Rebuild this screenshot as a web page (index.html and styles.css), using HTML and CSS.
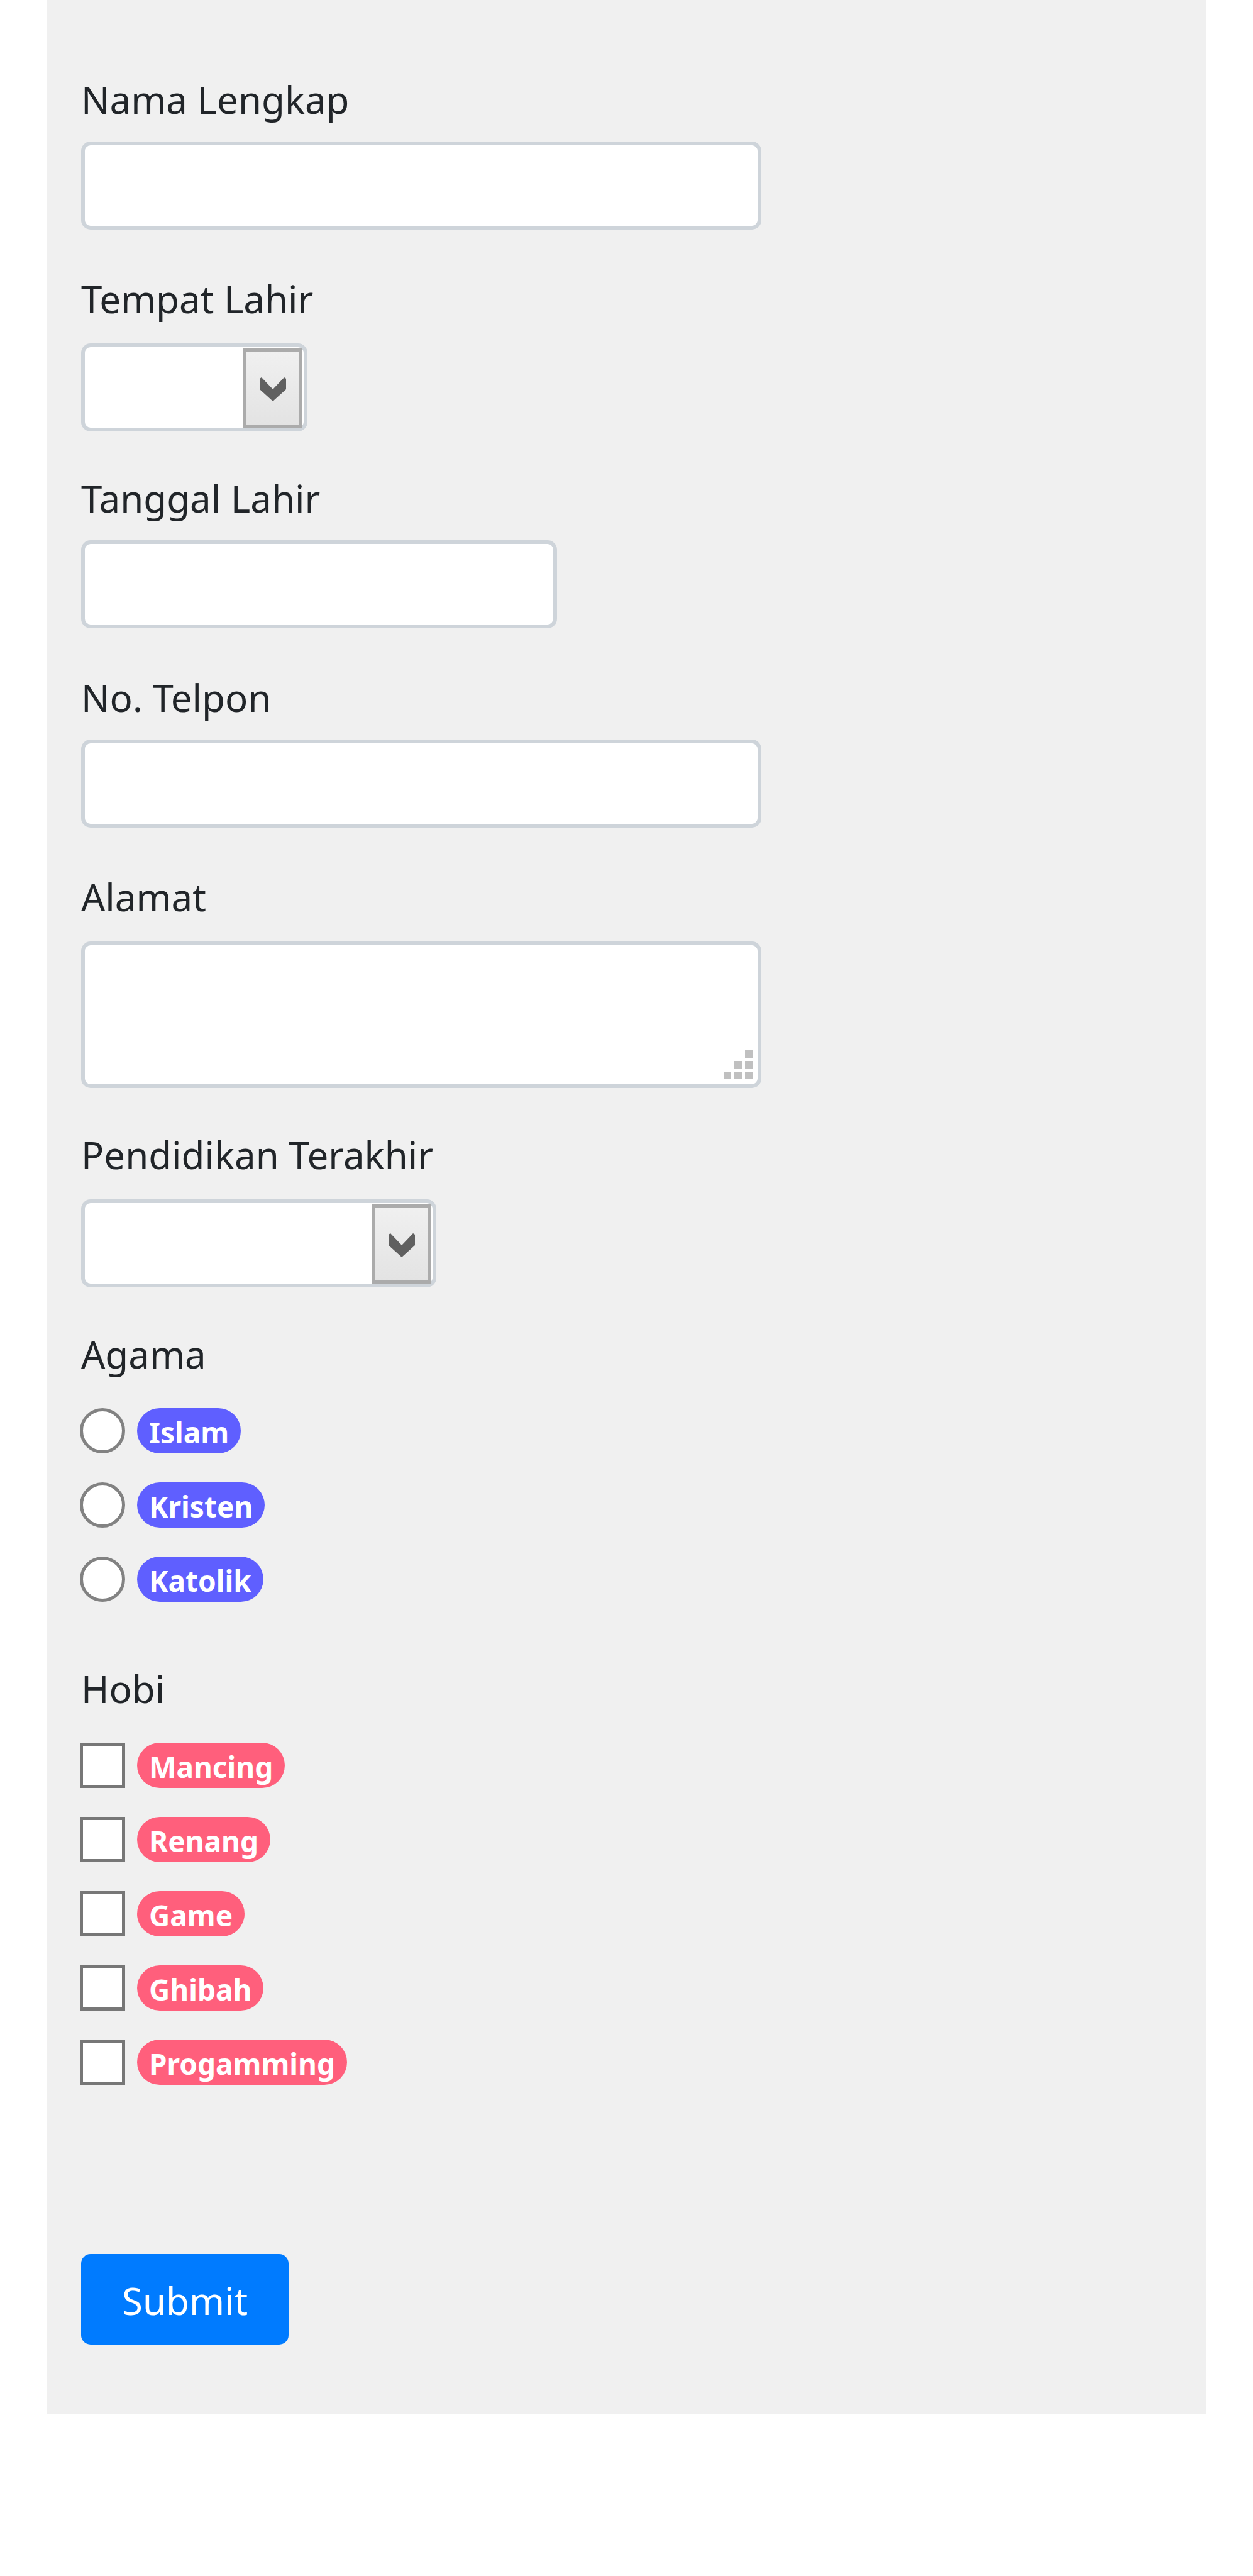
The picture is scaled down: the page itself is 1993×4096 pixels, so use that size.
FILE: index.html
```html
<!DOCTYPE html>
<html lang="id">
<head>
<meta charset="utf-8">
<meta name="viewport" content="width=device-width, initial-scale=1">
<title>Formulir Biodata</title>
<link rel="stylesheet" href="styles.css">
</head>
<body>
<form class="card">
  <div class="group">
    <label class="label" for="nama">Nama Lengkap</label>
    <input class="control control-full" type="text" id="nama" name="nama">
  </div>
  <div class="group group-loose">
    <label class="label" for="tempat">Tempat Lahir</label>
    <div class="overlay select-short">
      <select class="control" id="tempat" name="tempat"><option></option></select>
      <span class="arrow"><svg viewBox="0 0 42 38" aria-hidden="true"><path d="M0 2L3 0L21 19L39 0L42 2V19L21 38L0 19Z"/></svg></span>
    </div>
  </div>
  <div class="group">
    <label class="label" for="tanggal">Tanggal Lahir</label>
    <input class="control control-date" type="text" id="tanggal" name="tanggal">
  </div>
  <div class="group">
    <label class="label" for="telpon">No. Telpon</label>
    <input class="control control-full" type="tel" id="telpon" name="telpon">
  </div>
  <div class="group group-loose">
    <label class="label" for="alamat">Alamat</label>
    <div class="overlay control-full">
      <textarea class="control control-area" id="alamat" name="alamat"></textarea>
      <svg class="grip" viewBox="0 0 46 46" aria-hidden="true"><path d="M34 0h12v12H34zM17 17h12v12H17zM34 17h12v12H34zM0 34h12v12H0zM17 34h12v12H17zM34 34h12v12H34z"/></svg>
    </div>
  </div>
  <div class="group group-loose">
    <label class="label" for="pendidikan">Pendidikan Terakhir</label>
    <div class="overlay select-long">
      <select class="control" id="pendidikan" name="pendidikan"><option></option></select>
      <span class="arrow"><svg viewBox="0 0 42 38" aria-hidden="true"><path d="M0 2L3 0L21 19L39 0L42 2V19L21 38L0 19Z"/></svg></span>
    </div>
  </div>
  <fieldset class="choices">
    <legend class="label">Agama</legend>
    <div class="options">
      <label class="option"><input class="mark mark-radio" type="radio" name="agama"><span class="badge badge-blue">Islam</span></label>
      <label class="option"><input class="mark mark-radio" type="radio" name="agama"><span class="badge badge-blue">Kristen</span></label>
      <label class="option"><input class="mark mark-radio" type="radio" name="agama"><span class="badge badge-blue">Katolik</span></label>
    </div>
  </fieldset>
  <fieldset class="choices">
    <legend class="label">Hobi</legend>
    <div class="options">
      <label class="option"><input class="mark" type="checkbox" name="hobi"><span class="badge badge-pink">Mancing</span></label>
      <label class="option"><input class="mark" type="checkbox" name="hobi"><span class="badge badge-pink">Renang</span></label>
      <label class="option"><input class="mark" type="checkbox" name="hobi"><span class="badge badge-pink">Game</span></label>
      <label class="option"><input class="mark" type="checkbox" name="hobi"><span class="badge badge-pink">Ghibah</span></label>
      <label class="option"><input class="mark" type="checkbox" name="hobi"><span class="badge badge-pink">Progamming</span></label>
    </div>
  </fieldset>
  <button class="submit" type="submit">Submit</button>
</form>
</body>
</html>
```

FILE: styles.css
```css
* {
  box-sizing: border-box;
}

body {
  margin: 0;
  padding: 0 74px 258px;
  background: #fff;
  color: #212529;
  font-family: "Noto Sans", sans-serif;
  font-size: 60px;
  line-height: 82px;
}

.card {
  padding: 117px 55px 110px;
  background: #f0f0f0;
}

.group {
  display: flex;
  flex-direction: column;
  align-items: flex-start;
  gap: 26px;
  margin-bottom: 69px;
}

.group-loose {
  gap: 30px;
  margin-bottom: 65px;
}

.label {
  display: block;
  padding: 0;
}

.control {
  display: block;
  width: 100%;
  height: 140px;
  margin: 0;
  padding: 0 24px;
  border: 6px solid #ced4da;
  border-radius: 15px;
  background: #fff;
  color: inherit;
  font: inherit;
  appearance: none;
}

.control-full {
  width: 1082px;
  max-width: 100%;
}

.control-date {
  width: 757px;
  max-width: 100%;
}

.control-area {
  height: 233px;
  resize: none;
}

/* Stacks a control and its decoration in one grid cell */
.overlay {
  display: grid;
  max-width: 100%;
}

.overlay > * {
  grid-area: 1 / 1;
}

.select-short {
  width: 360px;
}

.select-long {
  width: 565px;
}

.arrow {
  display: grid;
  place-items: center;
  justify-self: end;
  width: 94px;
  margin: 8px 8px 6px 0;
  padding-top: 4px;
  border: 5px solid #ababab;
  background: linear-gradient(#f0f0f0, #e3e3e3);
  pointer-events: none;
}

.arrow svg {
  width: 42px;
  height: 38px;
  fill: #606060;
}

.grip {
  place-self: end;
  width: 46px;
  height: 46px;
  margin: 0 14px 14px 0;
  fill: #c0c0c0;
  pointer-events: none;
}

.choices {
  min-width: 0;
  margin: 0 0 97px;
  padding: 0;
  border: 0;
}

.options {
  display: flex;
  flex-direction: column;
  align-items: flex-start;
  gap: 46px;
  margin: 45px 0 0 -2px;
}

.option {
  display: flex;
  align-items: center;
  gap: 19px;
}

.mark {
  width: 72px;
  height: 72px;
  margin: 0;
  border: 5px solid #777;
  background: #fff;
  appearance: none;
}

.mark-radio {
  border-color: #828282;
  border-radius: 50%;
}

.mark:checked {
  background: #777;
  box-shadow: inset 0 0 0 10px #fff;
}

.badge {
  padding: 4px 19px 0;
  border-radius: 36px;
  color: #fff;
  font-size: 46px;
  font-weight: 700;
  line-height: 68px;
}

.badge-blue {
  background: #5f5fff;
}

.badge-pink {
  background: #ff5f7c;
}

.submit {
  display: block;
  height: 144px;
  margin-top: 269px;
  padding: 4px 65px 0;
  border: 0;
  border-radius: 15px;
  background: #007bff;
  color: #fff;
  font: inherit;
}
```
